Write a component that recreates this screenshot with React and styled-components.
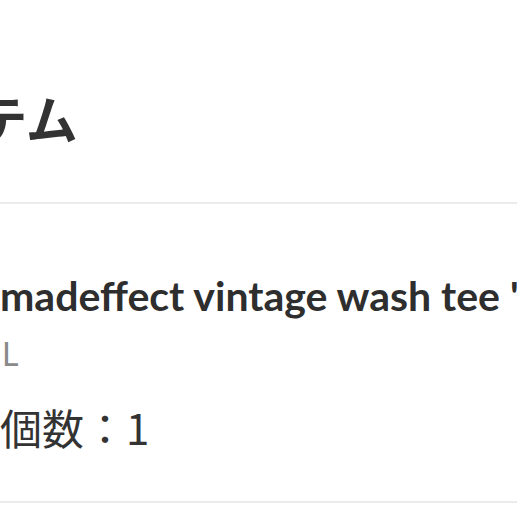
import React from "react";
import styled, { createGlobalStyle } from "styled-components";

const GlobalStyle = createGlobalStyle`
  html, body {
    margin: 0;
    padding: 0;
    background: #ffffff;
    overflow: hidden;
  }
  body {
    font-family: "Lato", "Noto Sans CJK JP", sans-serif;
    color: #333333;
  }
`;

const Page = styled.div`
  width: 517px;
  height: 517px;
  overflow: hidden;
`;

const Header = styled.div`
  padding-top: 87px;
  height: 115px;
  border-bottom: 2px solid #ebebeb;
`;

const Heading = styled.h1`
  margin: 0 0 0 -125px;
  font-family: "Noto Sans CJK JP", sans-serif;
  font-size: 52px;
  font-weight: 700;
  line-height: 1.2;
  color: #333333;
  white-space: nowrap;
`;

const Item = styled.div`
  padding: 67px 0 0 0;
  height: 230px;
  border-bottom: 2px solid #ebebeb;
  display: flex;
  flex-direction: column;
`;

const Name = styled.div`
  font-family: "Lato", sans-serif;
  font-weight: 700;
  font-size: 41px;
  line-height: 1.2;
  white-space: nowrap;
  color: #2e2e2e;
`;

const Variant = styled.div`
  font-family: "Lato", sans-serif;
  font-size: 32px;
  line-height: 1.2;
  color: #8a8a8a;
  margin-top: 15px;
  padding-left: 2px;
`;

const Quantity = styled.div`
  font-family: "Noto Sans CJK JP", sans-serif;
  font-size: 42px;
  line-height: 1.2;
  color: #333333;
  margin-top: 28px;
`;

export default function App() {
  return (
    <Page>
      <GlobalStyle />
      <Header>
        <Heading>アイテム</Heading>
      </Header>
      <Item>
        <Name>madeffect vintage wash tee 'Black'</Name>
        <Variant>L</Variant>
        <Quantity>個数：1</Quantity>
      </Item>
    </Page>
  );
}
